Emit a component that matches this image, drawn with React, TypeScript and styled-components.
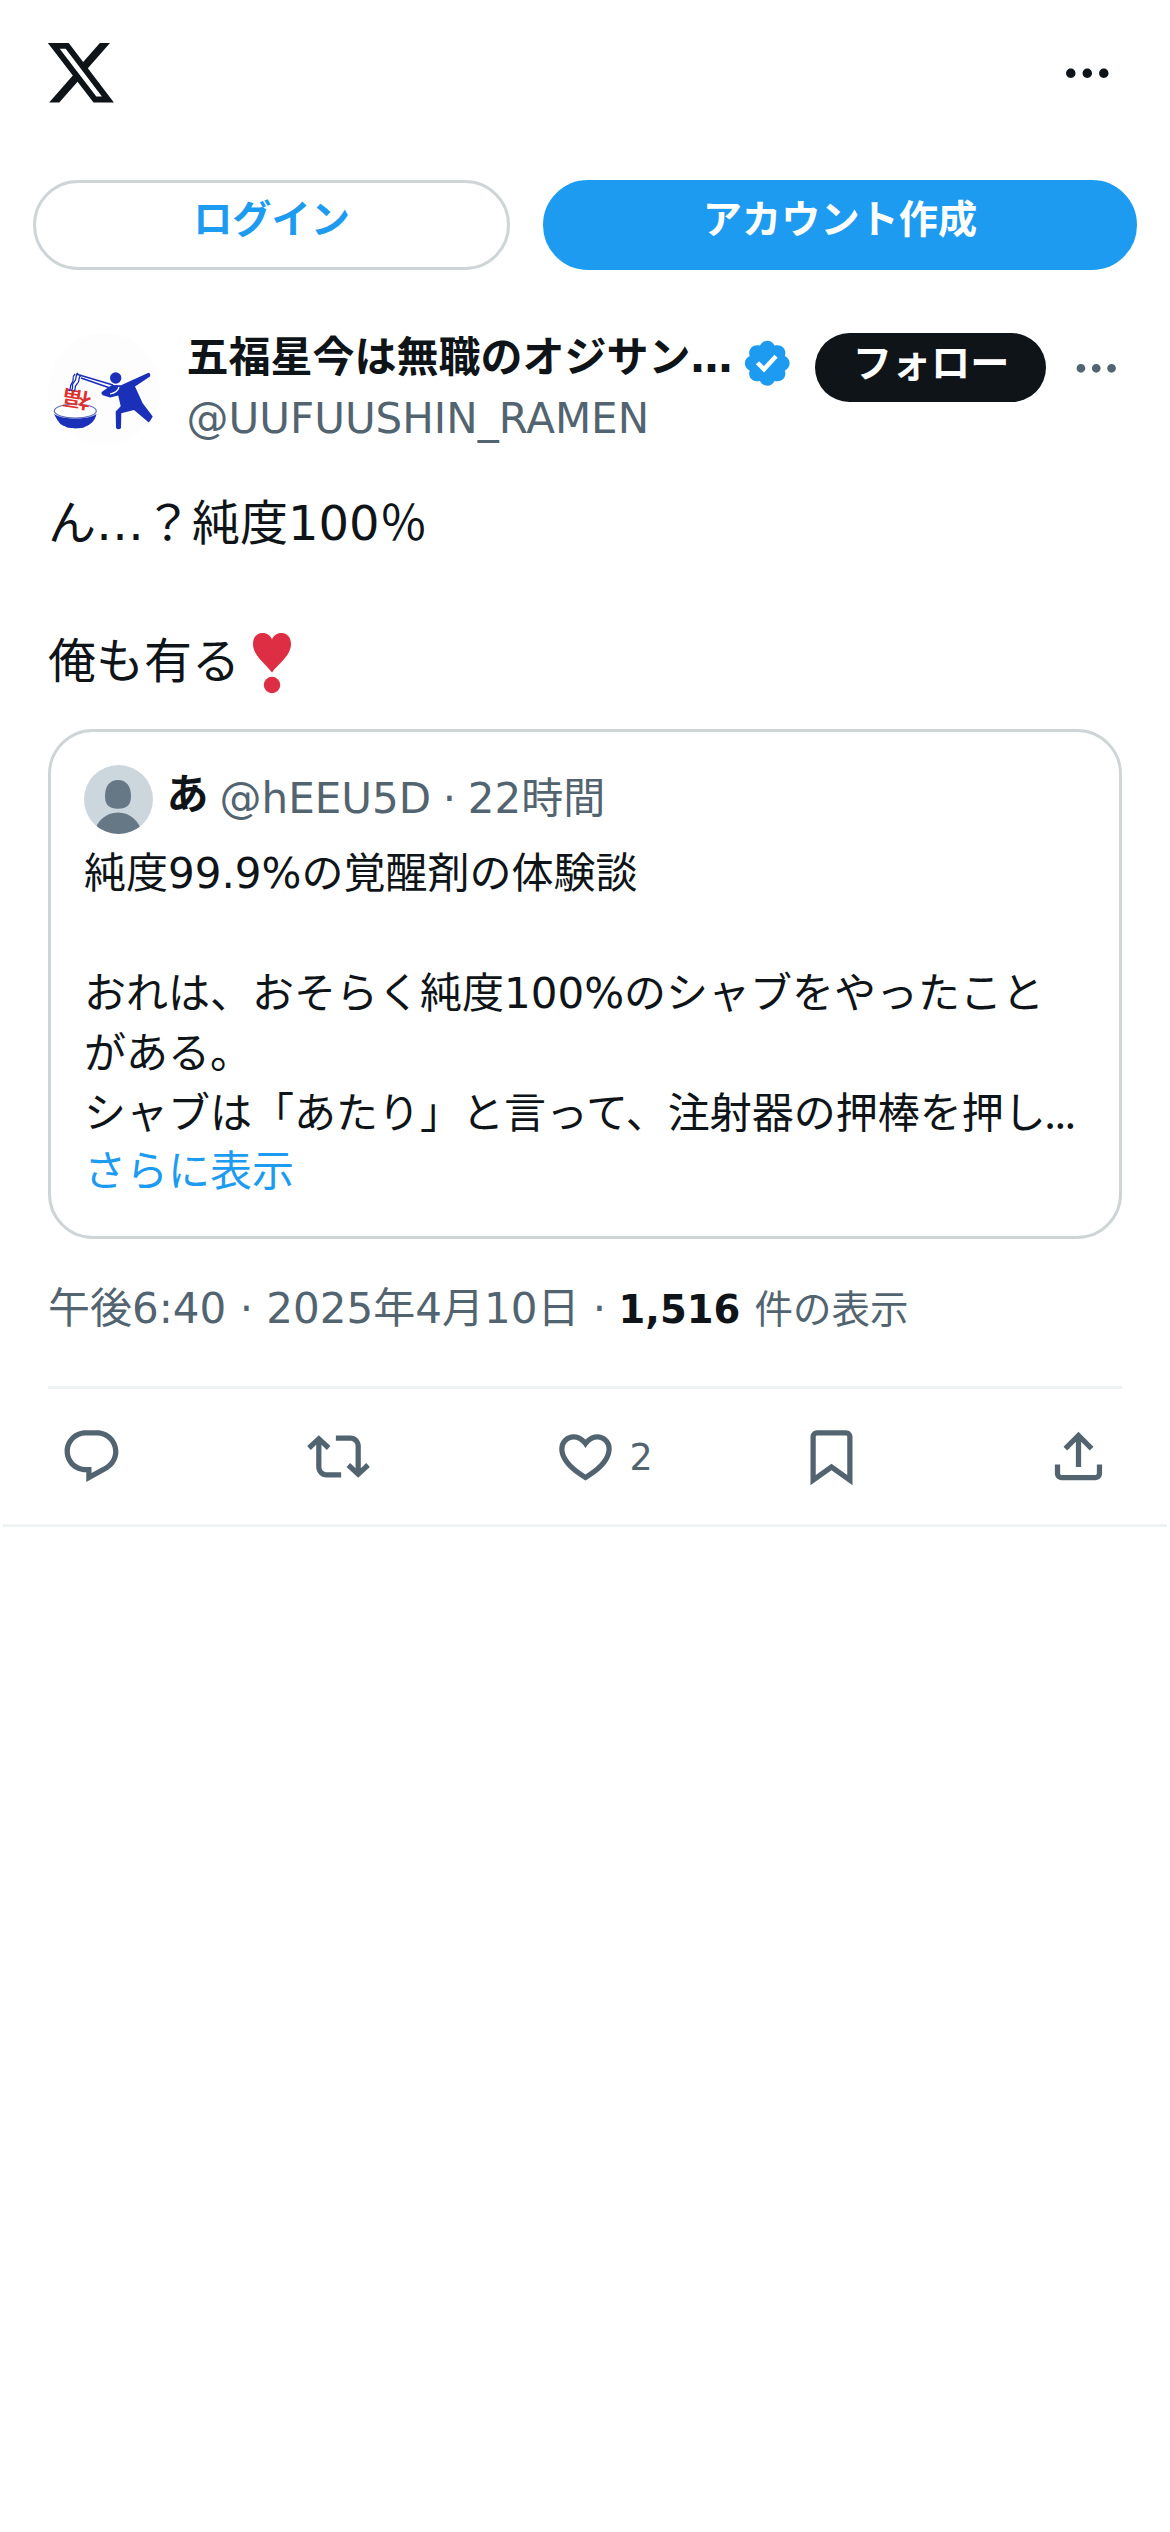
import React from "react";
import styled, { createGlobalStyle, css } from "styled-components";

const GlobalStyle = createGlobalStyle`
  * { box-sizing: border-box; }
  body { margin: 0; background: #fefffe; }
`;

const ink = "#0f1419";
const muted = "#536471";
const blue = "#1d9bf0";
const line = "#cfd5d7";
const hairline = "#eff2f3";

const Page = styled.main`
  width: 1170px;
  height: 2532px;
  overflow: hidden;
  background: #fefffe;
  color: ${ink};
  font-family: "DejaVu Sans", "Noto Sans CJK JP", sans-serif;
  font-size: 42px;
  line-height: 60px;
`;

const TopBar = styled.header`
  display: flex;
  justify-content: space-between;
  align-items: center;
  height: 146px;
  padding: 0 54px 0 44px;
`;

const Svg = styled.svg<{ $size: number; $color?: string }>`
  display: block;
  flex: none;
  width: ${(p) => p.$size}px;
  height: ${(p) => p.$size}px;
  fill: ${(p) => p.$color ?? muted};
`;

const AuthRow = styled.div`
  display: flex;
  gap: 33px;
  padding: 34px 33px 0;
`;

const AuthButton = styled.button<{ $primary?: boolean }>`
  height: 90px;
  width: ${(p) => (p.$primary ? 594 : 477)}px;
  padding: 0 0 10px;
  border-radius: 45px;
  border: 3px solid ${(p) => (p.$primary ? blue : line)};
  background: ${(p) => (p.$primary ? blue : "transparent")};
  color: ${(p) => (p.$primary ? "#fff" : blue)};
  font: bold 39.2px/56px "DejaVu Sans", "Noto Sans CJK JP", sans-serif;
`;

const Post = styled.article`
  padding: 63px 48px 0;
`;

const Author = styled.div`
  display: flex;
  height: 116px;
`;

const Avatar = styled.svg`
  flex: none;
  width: 112px;
  height: 112px;
  margin-right: 26.5px;
  border-radius: 50%;
`;

const Names = styled.div`
  display: flex;
  flex-direction: column;
  width: 630px;
`;

const NameLine = styled.div`
  display: flex;
  align-items: center;
  height: 62px;
  margin-bottom: -4.5px;
`;

const Name = styled.span`
  font-weight: bold;
  line-height: 60px;
  white-space: nowrap;
  margin-top: -10px;
  width: 554.5px;
`;

const Muted = styled.span`
  color: ${muted};
  white-space: pre;
`;

const FollowButton = styled.button`
  flex: none;
  width: 231px;
  height: 69px;
  padding: 0 0 7px 2px;
  border: 0;
  border-radius: 35px;
  background: ${ink};
  color: #fff;
  font: bold 39.2px/56px "DejaVu Sans", "Noto Sans CJK JP", sans-serif;
`;

const MoreSlot = styled.div`
  margin: 9px 0 0 24px;
`;

const Body = styled.div`
  height: 216.5px;
  margin-top: 38.5px;
  font-size: 48px;
  line-height: 71px;
`;

const Paragraph = styled.p`
  display: flex;
  align-items: center;
  height: 71px;
  margin: 0 0 67px;
  white-space: nowrap;
`;

const Emoji = styled.svg`
  width: 57px;
  height: 63px;
  margin: 5px 0 0 4px;
`;

const Quote = styled.section`
  height: 510px;
  margin-top: 25px;
  padding: 33px;
  border: 3px solid ${line};
  border-radius: 45px;
`;

const QuoteHead = styled.div`
  display: flex;
  align-items: center;
  height: 69px;
`;

const QuoteAvatar = styled.svg`
  width: 69px;
  height: 69px;
  margin-right: 13.5px;
  border-radius: 50%;
`;

const QuoteName = styled.span`
  font-weight: bold;
  margin: -10px 11px 0 0;
`;

const QuoteMeta = styled.div`
  display: flex;
  margin-top: -2px;
`;

const Dot = styled.span`
  margin: 0 11.7px;
  color: ${muted};
`;

const QuoteLine = styled.div<{ $link?: boolean }>`
  height: 60px;
  white-space: nowrap;
  ${(p) =>
    p.$link &&
    css`
      color: ${blue};
      margin-top: -2px;
    `}
`;

const Ellipsis = styled.span`
  margin-left: -1.5px;
  font-family: "Noto Sans CJK JP", sans-serif;
  line-height: 0;
  letter-spacing: -1.6px;
`;

const QuoteText = styled.div`
  margin-top: 10px;
`;

const Meta = styled.div`
  display: flex;
  align-items: baseline;
  height: 60px;
  margin: 40px 0 47px;
  color: ${muted};
  white-space: pre;
`;

const Views = styled.span`
  margin-left: -1px;
  font-size: 38.5px;
  word-spacing: 2px;
`;

const Count = styled.strong`
  color: ${ink};
`;

const Actions = styled.div`
  display: flex;
  justify-content: space-between;
  align-items: center;
  height: 138px;
  padding: 0 12px;
  border-top: 3px solid ${hairline};
`;

const Action = styled.div`
  display: flex;
  align-items: center;
  width: 63px;
  color: ${muted};
  font-size: 36.4px;
`;

const ActionCount = styled.span`
  margin: 2px 0 0 10px;
  padding-left: 3px;
`;

const Rule = styled.div`
  height: 3px;
  margin: 0 3px;
  background: ${hairline};
`;

const paths = {
  logo: "M18.244 2.25h3.308l-7.227 8.26 8.502 11.24H16.17l-5.214-6.817L4.99 21.75H1.68l7.73-8.835L1.254 2.25H8.08l4.713 6.231zm-1.161 17.52h1.833L7.084 4.126H5.117z",
  more: "M3 12c0-1.1.9-2 2-2s2 .9 2 2-.9 2-2 2-2-.9-2-2zm9 2c1.1 0 2-.9 2-2s-.9-2-2-2-2 .9-2 2 .9 2 2 2zm7 0c1.1 0 2-.9 2-2s-.9-2-2-2-2 .9-2 2 .9 2 2 2z",
  verified:
    "M22.25 12c0-1.43-.88-2.67-2.19-3.34.46-1.39.2-2.9-.81-3.91s-2.52-1.27-3.91-.81c-.66-1.31-1.91-2.19-3.34-2.19s-2.67.88-3.33 2.19c-1.4-.46-2.91-.2-3.92.81s-1.26 2.52-.8 3.91c-1.31.67-2.2 1.91-2.2 3.34s.89 2.67 2.2 3.34c-.46 1.39-.21 2.9.8 3.91s2.52 1.26 3.91.81c.67 1.31 1.91 2.19 3.34 2.19s2.68-.88 3.34-2.19c1.39.45 2.9.2 3.91-.81s1.27-2.52.81-3.91c1.31-.67 2.19-1.91 2.19-3.34zm-11.71 4.2L6.8 12.46l1.41-1.42 2.26 2.26 4.8-5.23 1.47 1.36-6.2 6.77z",
  reply:
    "M1.751 10c0-4.42 3.584-8 8.005-8h4.366c4.49 0 8.129 3.64 8.129 8.13 0 2.96-1.607 5.68-4.196 7.11l-8.054 4.46v-3.69h-.067c-4.49.1-8.183-3.51-8.183-8.01zm8.005-6c-3.317 0-6.005 2.69-6.005 6 0 3.37 2.77 6.08 6.138 6.01l.351-.01h1.761v2.3l5.087-2.81c1.951-1.08 3.163-3.13 3.163-5.36 0-3.39-2.744-6.13-6.129-6.13H9.756z",
  repost:
    "M4.5 3.88l4.432 4.14-1.364 1.46L5.5 7.55V16c0 1.1.896 2 2 2H13v2H7.5c-2.209 0-4-1.79-4-4V7.55L1.432 9.48.068 8.02 4.5 3.88zM16.5 6H11V4h5.5c2.209 0 4 1.79 4 4v8.45l2.068-1.93 1.364 1.46-4.432 4.14-4.432-4.14 1.364-1.46 2.068 1.93V8c0-1.1-.896-2-2-2z",
  like: "M16.697 5.5c-1.222-.06-2.679.51-3.89 2.16l-.805 1.09-.806-1.09C9.984 6.01 8.526 5.44 7.304 5.5c-1.243.07-2.349.78-2.91 1.91-.552 1.12-.633 2.78.479 4.82 1.074 1.97 3.257 4.27 7.129 6.61 3.87-2.34 6.052-4.64 7.126-6.61 1.111-2.04 1.03-3.7.477-4.82-.561-1.13-1.666-1.84-2.908-1.91zm4.187 7.69c-1.351 2.48-4.001 5.12-8.379 7.67l-.503.3-.504-.3c-4.379-2.55-7.029-5.19-8.382-7.67-1.36-2.5-1.41-4.86-.514-6.67.887-1.79 2.647-2.91 4.601-3.01 1.651-.09 3.368.56 4.798 2.01 1.429-1.45 3.146-2.1 4.796-2.01 1.954.1 3.714 1.22 4.601 3.01.896 1.81.846 4.17-.514 6.67z",
  bookmark:
    "M4 4.5C4 3.12 5.119 2 6.5 2h11C18.881 2 20 3.12 20 4.5v18.44l-8-5.71-8 5.71V4.5zM6.5 4c-.276 0-.5.22-.5.5v14.56l6-4.29 6 4.29V4.5c0-.28-.224-.5-.5-.5h-11z",
  share:
    "M12 2.59l5.7 5.7-1.41 1.42L13 6.41V16h-2V6.41l-3.3 3.3-1.41-1.42L12 2.59zM21 15l-.02 3.51c0 1.38-1.12 2.49-2.5 2.49H5.5C4.11 21 3 19.88 3 18.5V15h2v3.5c0 .28.22.5.5.5h12.98c.28 0 .5-.22.5-.5L19 15h2z",
};

function Icon({ name, size, color }: { name: keyof typeof paths; size: number; color?: string }) {
  return (
    <Svg viewBox="0 0 24 24" $size={size} $color={color}>
      <path d={paths[name]} />
    </Svg>
  );
}

const BowlCharacter = styled.text`
  font: 500 24px "Noto Sans CJK JP", sans-serif;
  text-anchor: middle;
  fill: #e0302c;
`;

function RamenAvatar() {
  return (
    <Avatar viewBox="0 0 112 112">
      <rect width="112" height="112" fill="#fdfdfd" />
      <ellipse cx="27.3" cy="78" rx="21" ry="7" fill="#fff" stroke="#5b6bb5" strokeWidth="1.2" />
      <BowlCharacter transform="translate(30 58.5) rotate(189) scale(1.2 .88)">福</BowlCharacter>
      <g fill="none" stroke="#1a30b8" strokeWidth="1.3">
        <path d="M30 40c-4 4 0 5-4 9s1 5-3 9" />
        <path d="M27 41c-4 4 0 5-3 9s0 4-3 8" />
        <path d="M33 42c-4 4 0 5-4 9s0 4-3 7" />
        <path d="M28 41l37 11M33 45l29 10" strokeWidth="1.8" />
      </g>
      <g fill="#1a30b8">
        <circle cx="67.7" cy="45" r="5.7" />
        <path d="M100.5 39.8q2.5.5 1.5 3.7L87 53.5l7.7 16.8 10.6 14-3.6 6L86 77l-12.7 3.3L73 95q-2.4 2.5-5 0l-.3-16.6 5-5.2-2.5-10.7-8 2-7.5-2.3q-2.5-2.5 0-4l9.3-6.2 9 .2z" />
        <path d="M6 81c8 6 35 6 42.500 0-1.500 7-6 10.500-11 12.500-2 2.500-18 2.500-20 0C12 91.500 7.500 88 6 81z" />
      </g>
      <path d="M62 61c5-1 8-3 9-7" fill="none" stroke="#fff" strokeWidth="1.2" />
    </Avatar>
  );
}

export default function App() {
  return (
    <Page>
      <GlobalStyle />
      <TopBar>
        <Icon name="logo" size={73.5} color={ink} />
        <Icon name="more" size={56.6} color={ink} />
      </TopBar>
      <AuthRow>
        <AuthButton>ログイン</AuthButton>
        <AuthButton $primary>アカウント作成</AuthButton>
      </AuthRow>
      <Post>
        <Author>
          <RamenAvatar />
          <Names>
            <NameLine>
              <Name>五福星今は無職のオジサン…</Name>
              <Icon name="verified" size={52.5} color={blue} />
            </NameLine>
            <Muted>@UUFUUSHIN_RAMEN</Muted>
          </Names>
          <FollowButton>フォロー</FollowButton>
          <MoreSlot>
            <Icon name="more" size={52.5} />
          </MoreSlot>
        </Author>
        <Body>
          <Paragraph>ん…？純度100％</Paragraph>
          <Paragraph>
            俺も有る
            <Emoji viewBox="0 0 57 63" fill="#dd2e44">
              <path d="M28 40.500C22 32 9 24 9 12 9 5 13 1 18.500 1c4.500 0 8 2.500 9.500 6.500C29.500 3.500 33 1 37.500 1 43 1 47 5 47 12c0 12-13 20-19 28.500z" />
              <circle cx="28" cy="53" r="8.200" />
            </Emoji>
          </Paragraph>
        </Body>
        <Quote>
          <QuoteHead>
            <QuoteAvatar viewBox="0 0 69 69">
              <rect width="69" height="69" fill="#ccd6dd" />
              <g fill="#667785">
                <path d="M34 15c8 0 13 6 13 16 0 9-4 12.700-13 12.700S21 40 21 31c0-10 5-16 13-16z" />
                <path d="M10 69c2-13 12-21.500 24-21.500S56 56 58 69z" />
              </g>
            </QuoteAvatar>
            <QuoteName>あ</QuoteName>
            <QuoteMeta>
              <Muted>@hEEU5D</Muted>
              <Dot>·</Dot>
              <Muted>22時間</Muted>
            </QuoteMeta>
          </QuoteHead>
          <QuoteText>
            <QuoteLine>純度99.9%の覚醒剤の体験談</QuoteLine>
            <QuoteLine />
            <QuoteLine>おれは、おそらく純度100%のシャブをやったこと</QuoteLine>
            <QuoteLine>がある。</QuoteLine>
            <QuoteLine>
              シャブは「あたり」と言って、注射器の押棒を押し<Ellipsis>...</Ellipsis>
            </QuoteLine>
            <QuoteLine $link>さらに表示</QuoteLine>
          </QuoteText>
        </Quote>
        <Meta>
          <span>午後6:40 · 2025年4月10日 · </span>
          <Views>
            <Count>1,516</Count> 件の表示
          </Views>
        </Meta>
        <Actions>
          <Action>
            <Icon name="reply" size={63} />
          </Action>
          <Action>
            <Icon name="repost" size={63} />
          </Action>
          <Action>
            <Icon name="like" size={63} />
            <ActionCount>2</ActionCount>
          </Action>
          <Action>
            <Icon name="bookmark" size={63} />
          </Action>
          <Action>
            <Icon name="share" size={63} />
          </Action>
        </Actions>
      </Post>
      <Rule />
    </Page>
  );
}
